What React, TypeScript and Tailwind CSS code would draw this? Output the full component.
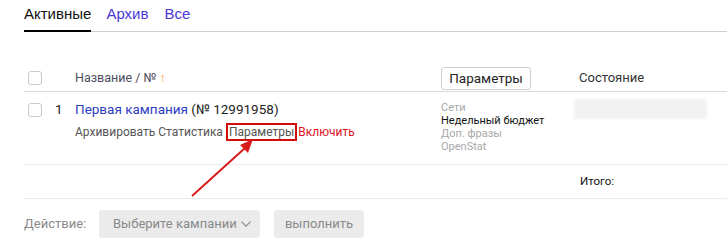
import React from 'react';

function Checkbox() {
  return <div className="w-[14px] h-[14px] border border-[#c9c9c9] rounded-[3px] bg-white shrink-0" />;
}

export default function App() {
  return (
    <div className="relative w-[727px] h-[243px] bg-white overflow-hidden font-['Roboto',sans-serif] text-[#333]">
      {/* tabs */}
      <div className="ml-[24px] flex items-end border-b border-[#cfcfcf] text-[15px] leading-[20px] font-['Liberation_Sans',sans-serif]">
        <div className="pt-[4px] pb-[6px] border-b-2 border-black -mb-px text-[#111]">Активные</div>
        <div className="pt-[4px] pb-[7px] ml-[15px] text-[#4a36d6]">Архив</div>
        <div className="pt-[4px] pb-[7px] ml-[16px] text-[#4a36d6]">Все</div>
      </div>

      {/* header row */}
      <div className="ml-[24px] mt-[33px] h-[27px] flex items-center border-b border-[#d8d8de]">
        <div className="w-[51px] pl-[4px] flex items-center">
          <Checkbox />
        </div>
        <div className="w-[366px] text-[12.5px] text-[#4d4d5c]">
          Название / № <span className="text-[#f0a33a]">↑</span>
        </div>
        <div className="w-[133px]">
          <button className="h-[23px] w-[90px] border border-[#cfcfcf] rounded-[3px] text-[13.5px] text-[#222] bg-white">
            Параметры
          </button>
        </div>
        <div className="pl-[5px] text-[13px] text-[#333]">Состояние</div>
      </div>

      {/* campaign row */}
      <div className="ml-[24px] h-[73px] flex border-b border-[#ececec]">
        <div className="w-[51px] pl-[4px] pt-[11px] flex items-start">
          <Checkbox />
          <span className="ml-[13px] -mt-[3px] text-[13.5px] leading-[18px] text-[#222]">1</span>
        </div>
        <div className="w-[366px] pt-[8px]">
          <div className="text-[13.5px] leading-[18px]">
            <span className="text-[#2b3cc0]">Первая кампания</span>{' '}
            <span className="text-[#222]">(№ 12991958)</span>
          </div>
          <div className="mt-[5px] text-[12px] leading-[18px] text-[#555] whitespace-nowrap">
            Архивировать Статистика{' '}
            <span className="inline-block border-2 border-[#d40b0b] leading-[14px] px-[1px]">Параметры</span>{' '}
            <span className="text-[#e0101e] -ml-[2px]">Включить</span>
          </div>
        </div>
        <div className="w-[133px] pt-[9px] text-[11px] leading-[13px] whitespace-nowrap">
          <div className="text-[#a8a8a8]">Сети</div>
          <div className="text-[#111]">Недельный бюджет</div>
          <div className="text-[#a8a8a8]">Доп. фразы</div>
          <div className="text-[#a8a8a8]">OpenStat</div>
        </div>
        <div className="pt-[7px]">
          <div className="w-[133px] h-[20px] bg-[#f2f2f2] blur-[1.5px]" />
        </div>
      </div>

      {/* total row */}
      <div className="ml-[24px] h-[34px] flex items-center border-b border-[#ececec]">
        <div className="ml-[556px] text-[11.5px] text-[#111]">Итого:</div>
      </div>

      {/* action row */}
      <div className="ml-[24px] mt-[11px] flex items-center text-[13px] text-[#8a8a8a] whitespace-nowrap">
        <span className="w-[75px] shrink-0">Действие:</span>
        <div className="h-[28px] w-[161px] shrink-0 bg-[#ebebeb] rounded-[3px] flex items-center pl-[14px]">
          Выберите кампании
          <svg width="10" height="6" viewBox="0 0 10 6" className="ml-[4px]">
            <path d="M0.5 0.7 L5 5.2 L9.5 0.7" fill="none" stroke="#888" strokeWidth="1.1" />
          </svg>
        </div>
        <div className="ml-[14px] h-[28px] w-[90px] shrink-0 bg-[#ebebeb] rounded-[3px] flex items-center justify-center">
          выполнить
        </div>
      </div>

      {/* arrow annotation */}
      <svg className="absolute left-0 top-0 pointer-events-none" width="727" height="243">
        <line x1="192" y1="196" x2="245" y2="148" stroke="#d81c1c" strokeWidth="2" />
        <polygon points="253,139 240,145 248,153" fill="#d81c1c" />
      </svg>
    </div>
  );
}
